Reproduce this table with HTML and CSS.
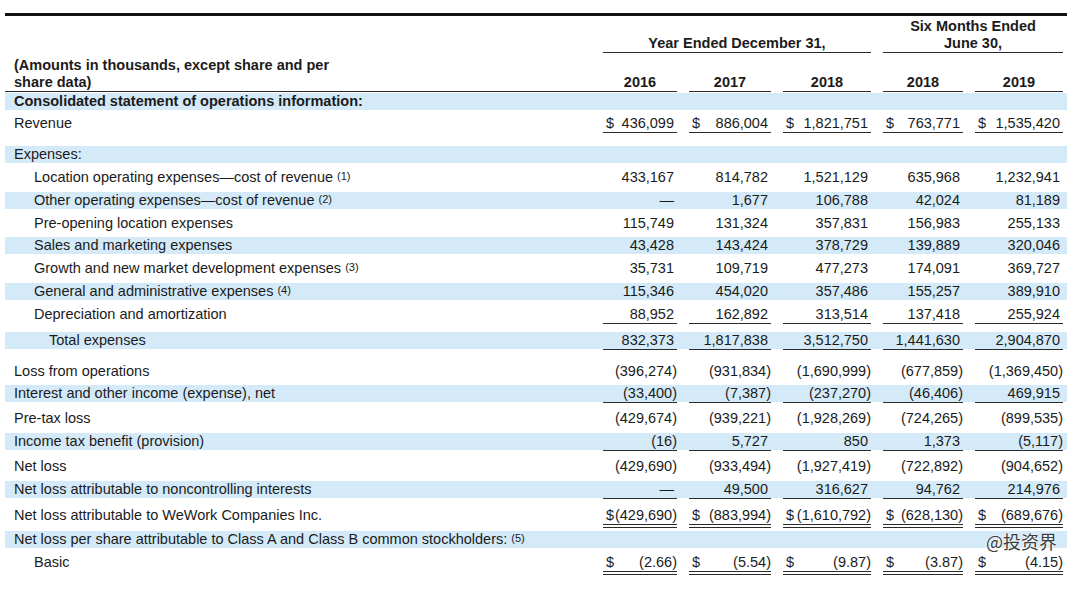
FILE: index.html
```html
<!DOCTYPE html>
<html>
<head>
<meta charset="utf-8">
<title>Selected financial data</title>
<link rel="stylesheet" href="styles.css">
</head>
<body>
<div class="sheet">
  <div class="head-a">
    <div class="grp grp-year">Year Ended December 31,</div>
    <div class="grp grp-six">Six Months Ended<br>June 30,</div>
  </div>
  <div class="head-b">
    <div class="amt">(Amounts in thousands, except share and per<br>share data)</div>
    <div class="yr">2016</div>
    <div class="yr">2017</div>
    <div class="yr">2018</div>
    <div class="yr">2018</div>
    <div class="yr">2019</div>
  </div>

  <div class="row band first">
    <div class="lbl b">Consolidated statement of operations information:</div>
  </div>
  <div class="row">
    <div class="lbl">Revenue</div>
    <div class="c ul"><span>$</span><span>436,099</span></div>
    <div class="c ul"><span>$</span><span>886,004</span></div>
    <div class="c ul"><span>$</span><span>1,821,751</span></div>
    <div class="c ul"><span>$</span><span>763,771</span></div>
    <div class="c ul"><span>$</span><span>1,535,420</span></div>
  </div>

  <div class="row band sec">
    <div class="lbl">Expenses:</div>
  </div>
  <div class="row">
    <div class="lbl i1">Location operating expenses—cost of revenue <span class="fn">(1)</span></div>
    <div class="c">433,167</div>
    <div class="c">814,782</div>
    <div class="c">1,521,129</div>
    <div class="c">635,968</div>
    <div class="c">1,232,941</div>
  </div>
  <div class="row band">
    <div class="lbl i1">Other operating expenses—cost of revenue <span class="fn">(2)</span></div>
    <div class="c">—</div>
    <div class="c">1,677</div>
    <div class="c">106,788</div>
    <div class="c">42,024</div>
    <div class="c">81,189</div>
  </div>
  <div class="row">
    <div class="lbl i1">Pre-opening location expenses</div>
    <div class="c">115,749</div>
    <div class="c">131,324</div>
    <div class="c">357,831</div>
    <div class="c">156,983</div>
    <div class="c">255,133</div>
  </div>
  <div class="row band">
    <div class="lbl i1">Sales and marketing expenses</div>
    <div class="c">43,428</div>
    <div class="c">143,424</div>
    <div class="c">378,729</div>
    <div class="c">139,889</div>
    <div class="c">320,046</div>
  </div>
  <div class="row">
    <div class="lbl i1">Growth and new market development expenses <span class="fn">(3)</span></div>
    <div class="c">35,731</div>
    <div class="c">109,719</div>
    <div class="c">477,273</div>
    <div class="c">174,091</div>
    <div class="c">369,727</div>
  </div>
  <div class="row band">
    <div class="lbl i1">General and administrative expenses <span class="fn">(4)</span></div>
    <div class="c">115,346</div>
    <div class="c">454,020</div>
    <div class="c">357,486</div>
    <div class="c">155,257</div>
    <div class="c">389,910</div>
  </div>
  <div class="row">
    <div class="lbl i1">Depreciation and amortization</div>
    <div class="c ul">88,952</div>
    <div class="c ul">162,892</div>
    <div class="c ul">313,514</div>
    <div class="c ul">137,418</div>
    <div class="c ul">255,924</div>
  </div>
  <div class="row band total">
    <div class="lbl i2">Total expenses</div>
    <div class="c ul">832,373</div>
    <div class="c ul">1,817,838</div>
    <div class="c ul">3,512,750</div>
    <div class="c ul">1,441,630</div>
    <div class="c ul">2,904,870</div>
  </div>

  <div class="row sec2">
    <div class="lbl">Loss from operations</div>
    <div class="c"><span class="neg">(396,274)</span></div>
    <div class="c"><span class="neg">(931,834)</span></div>
    <div class="c"><span class="neg">(1,690,999)</span></div>
    <div class="c"><span class="neg">(677,859)</span></div>
    <div class="c"><span class="neg">(1,369,450)</span></div>
  </div>
  <div class="row band">
    <div class="lbl">Interest and other income (expense), net</div>
    <div class="c ul"><span class="neg">(33,400)</span></div>
    <div class="c ul"><span class="neg">(7,387)</span></div>
    <div class="c ul"><span class="neg">(237,270)</span></div>
    <div class="c ul"><span class="neg">(46,406)</span></div>
    <div class="c ul">469,915</div>
  </div>
  <div class="row after-ul">
    <div class="lbl">Pre-tax loss</div>
    <div class="c"><span class="neg">(429,674)</span></div>
    <div class="c"><span class="neg">(939,221)</span></div>
    <div class="c"><span class="neg">(1,928,269)</span></div>
    <div class="c"><span class="neg">(724,265)</span></div>
    <div class="c"><span class="neg">(899,535)</span></div>
  </div>
  <div class="row band">
    <div class="lbl">Income tax benefit (provision)</div>
    <div class="c ul"><span class="neg">(16)</span></div>
    <div class="c ul">5,727</div>
    <div class="c ul">850</div>
    <div class="c ul">1,373</div>
    <div class="c ul"><span class="neg">(5,117)</span></div>
  </div>
  <div class="row after-ul">
    <div class="lbl">Net loss</div>
    <div class="c"><span class="neg">(429,690)</span></div>
    <div class="c"><span class="neg">(933,494)</span></div>
    <div class="c"><span class="neg">(1,927,419)</span></div>
    <div class="c"><span class="neg">(722,892)</span></div>
    <div class="c"><span class="neg">(904,652)</span></div>
  </div>
  <div class="row band">
    <div class="lbl">Net loss attributable to noncontrolling interests</div>
    <div class="c ul">—</div>
    <div class="c ul">49,500</div>
    <div class="c ul">316,627</div>
    <div class="c ul">94,762</div>
    <div class="c ul">214,976</div>
  </div>
  <div class="row after-ul2">
    <div class="lbl">Net loss attributable to WeWork Companies Inc.</div>
    <div class="c dl"><span>$</span><span class="neg">(429,690)</span></div>
    <div class="c dl"><span>$</span><span class="neg">(883,994)</span></div>
    <div class="c dl"><span>$</span><span class="neg">(1,610,792)</span></div>
    <div class="c dl"><span>$</span><span class="neg">(628,130)</span></div>
    <div class="c dl"><span>$</span><span class="neg">(689,676)</span></div>
  </div>
  <div class="row band after-dl">
    <div class="lbl">Net loss per share attributable to Class A and Class B common stockholders: <span class="fn">(5)</span></div>
  </div>
  <div class="row">
    <div class="lbl i1">Basic</div>
    <div class="c dl"><span>$</span><span class="neg">(2.66)</span></div>
    <div class="c dl"><span>$</span><span class="neg">(5.54)</span></div>
    <div class="c dl"><span>$</span><span class="neg">(9.87)</span></div>
    <div class="c dl"><span>$</span><span class="neg">(3.87)</span></div>
    <div class="c dl"><span>$</span><span class="neg">(4.15)</span></div>
  </div>
</div>
<div class="wm">@投资界</div>
</body>
</html>
```

FILE: styles.css
```css
html, body {
  margin: 0;
  padding: 0;
  background: #ffffff;
}

body {
  position: relative;
  width: 1080px;
  height: 590px;
  overflow: hidden;
  font-family: "Liberation Sans", Arial, Helvetica, sans-serif;
  font-size: 14.5px;
  color: #1b1b1b;
}

.sheet {
  margin: 13px 0 0 5px;
  width: 1062px;
  border-top: 3px solid #111;
}

.head-a,
.head-b,
.row {
  display: grid;
  grid-template-columns: 586px 74px 82px 88px 80px 88px;
  column-gap: 12px;
  padding-right: 4px;
}

.head-a {
  height: 37px;
  align-items: end;
}

.grp {
  font-weight: bold;
  text-align: center;
  line-height: 17px;
  border-bottom: 1px solid #2a2a2a;
}

.grp-year {
  grid-column: 2 / 5;
}

.grp-six {
  grid-column: 5 / 7;
}

.head-b {
  height: 39px;
  align-items: end;
}

.amt {
  font-weight: bold;
  line-height: 17px;
  padding-left: 9px;
  margin-right: -12px;
  border-bottom: 1px solid #2a2a2a;
}

.yr {
  font-weight: bold;
  text-align: center;
  line-height: 17px;
  border-bottom: 1px solid #2a2a2a;
}

.row {
  height: 17px;
  grid-template-rows: 17px;
  margin-top: 5.75px;
  line-height: 17px;
}

.row.first {
  margin-top: 0.5px;
}

.row.sec {
  margin-top: 14px;
}

.row.total {
  margin-top: 9.5px;
}

.row.sec2 {
  margin-top: 13.5px;
}

.row.after-ul {
  margin-top: 8px;
}

.row.after-ul2 {
  margin-top: 9px;
}

.row.after-dl {
  margin-top: 7px;
}

.band {
  background: #d5eaf8;
}

.lbl {
  padding-left: 9px;
  white-space: nowrap;
}

.lbl.b {
  font-weight: bold;
}

.lbl.i1 {
  padding-left: 29px;
}

.lbl.i2 {
  padding-left: 44px;
}

.fn {
  font-size: 11px;
  position: relative;
  top: -2px;
}

.c {
  height: 17px;
  padding: 0 3px;
  display: flex;
  justify-content: flex-end;
  align-items: center;
  white-space: nowrap;
}

.c span:first-child:not(:last-child) {
  margin-right: auto;
}

.neg {
  margin-right: -3px;
}

.c.ul {
  border-bottom: 1px solid #2a2a2a;
}

.c.dl {
  border-bottom: 4px double #2a2a2a;
}

.wm {
  position: absolute;
  left: 986px;
  top: 532px;
  font-family: "Noto Sans CJK SC", sans-serif;
  font-size: 18px;
  line-height: 18px;
  color: #3c3c3c;
  text-shadow: 0 0 2px #fff, 0 0 2px #fff;
}
```
